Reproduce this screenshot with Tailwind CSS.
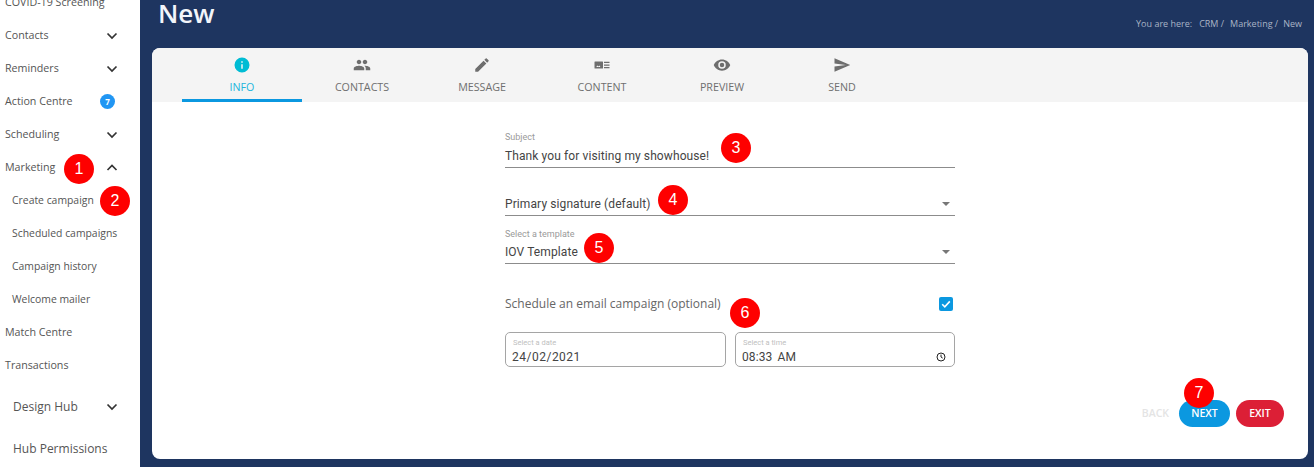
<!doctype html>
<html>
<head>
<meta charset="utf-8">
<script src="https://cdn.jsdelivr.net/npm/@tailwindcss/browser@4"></script>
</head>
<body class="m-0 overflow-hidden bg-[#1e3560]">
<div class="relative flex h-[467px] w-[1314px] overflow-hidden font-['Open_Sans',sans-serif]">

  <aside class="h-full w-[140px] shrink-0 overflow-hidden bg-white text-[10.7px] text-[#555]">
    <div class="mt-[-14px]">
      <div class="flex h-[33px] items-center pl-[5px]">COVID-19 Screening</div>
      <div class="flex h-[33px] items-center justify-between pl-[5px] pr-[22px]"><span>Contacts</span><svg class="h-[12px] w-[12px]" viewBox="0 0 12 12" fill="none" stroke="#333" stroke-width="1.7"><path d="M1.5 3.5l4.5 4.5L10.5 3.5"/></svg></div>
      <div class="flex h-[33px] items-center justify-between pl-[5px] pr-[22px]"><span>Reminders</span><svg class="h-[12px] w-[12px]" viewBox="0 0 12 12" fill="none" stroke="#333" stroke-width="1.7"><path d="M1.5 3.5l4.5 4.5L10.5 3.5"/></svg></div>
      <div class="flex h-[33px] items-center justify-between pl-[5px] pr-[25px]"><span>Action Centre</span><span class="flex h-[15px] w-[15px] items-center justify-center rounded-full bg-[#2196f3] text-[8px] font-bold text-white">7</span></div>
      <div class="flex h-[33px] items-center justify-between pl-[5px] pr-[22px]"><span>Scheduling</span><svg class="h-[12px] w-[12px]" viewBox="0 0 12 12" fill="none" stroke="#333" stroke-width="1.7"><path d="M1.5 3.5l4.5 4.5L10.5 3.5"/></svg></div>
      <div class="flex h-[33px] items-center justify-between pl-[5px] pr-[22px]"><span>Marketing</span><svg class="h-[12px] w-[12px]" viewBox="0 0 12 12" fill="none" stroke="#333" stroke-width="1.7"><path d="M1.5 8L6 3.5 10.5 8"/></svg></div>
      <div class="flex h-[33px] items-center pl-[12px] text-[10.4px]">Create campaign</div>
      <div class="flex h-[33px] items-center pl-[12px] text-[10.4px]">Scheduled campaigns</div>
      <div class="flex h-[33px] items-center pl-[12px] text-[10.4px]">Campaign history</div>
      <div class="flex h-[33px] items-center pl-[12px] text-[10.4px]">Welcome mailer</div>
      <div class="flex h-[33px] items-center pl-[5px]">Match Centre</div>
      <div class="flex h-[33px] items-center pl-[5px]">Transactions</div>
      <div class="mt-[4px] flex h-[42px] items-center justify-between pl-[13px] pr-[22px] text-[12px]"><span>Design Hub</span><svg class="h-[12px] w-[12px]" viewBox="0 0 12 12" fill="none" stroke="#333" stroke-width="1.7"><path d="M1.5 3.5l4.5 4.5L10.5 3.5"/></svg></div>
      <div class="flex h-[42px] items-center pl-[13px] text-[12px]">Hub Permissions</div>
    </div>
  </aside>

  <main class="flex h-full min-w-0 flex-1 flex-col pl-[12px] pr-[6px]">
    <header class="flex h-[48px] shrink-0 items-start justify-between">
      <h1 class="ml-[6px] mt-[-5px] text-[26px] font-semibold leading-[36px] text-[#f2f5fa]">New</h1>
      <div class="mr-[6px] mt-[17px] text-[9px] leading-[14px] text-[#a9b4c6]"><span class="mr-[7px]">You are here:</span><span class="mr-[6px]">CRM /</span><span class="mr-[5px]">Marketing /</span><span>New</span></div>
    </header>

    <section class="flex h-[411px] flex-col overflow-hidden rounded-[8px] bg-white">
      <nav class="flex h-[54px] shrink-0 bg-[#f4f4f4] pl-[30px] text-[10.7px] text-[#6f6f6f]">
        <div class="flex w-[120px] flex-col items-center border-b-[3px] border-[#0b98e0] text-[#22b5dc]">
          <svg class="mt-[8px] h-[18px] w-[18px]" viewBox="0 0 24 24" fill="#00bcd4"><path d="M12 2a10 10 0 100 20 10 10 0 000-20zm1 15h-2v-6h2v6zm0-8h-2V7h2v2z"/></svg>
          <span class="mt-[5px] leading-[16px]">INFO</span>
        </div>
        <div class="flex w-[120px] flex-col items-center">
          <svg class="mt-[8px] h-[18px] w-[18px]" viewBox="0 0 24 24" fill="#6e6e6e"><path d="M16 11c1.66 0 2.99-1.34 2.99-3S17.66 5 16 5s-3 1.34-3 3 1.34 3 3 3zm-8 0c1.66 0 2.99-1.34 2.99-3S9.66 5 8 5 5 6.34 5 8s1.34 3 3 3zm0 2c-2.33 0-7 1.17-7 3.5V19h14v-2.5C15 14.17 10.33 13 8 13zm8 0c-.29 0-.62.02-.97.05 1.16.84 1.97 1.97 1.97 3.45V19h6v-2.5c0-2.33-4.67-3.5-7-3.5z"/></svg>
          <span class="mt-[5px] leading-[16px]">CONTACTS</span>
        </div>
        <div class="flex w-[120px] flex-col items-center">
          <svg class="mt-[8px] h-[18px] w-[18px]" viewBox="0 0 24 24" fill="#6e6e6e"><path d="M3 17.25V21h3.75L17.81 9.94l-3.75-3.75L3 17.25zM20.71 7.04a1 1 0 000-1.41l-2.34-2.34a1 1 0 00-1.41 0l-1.83 1.83 3.75 3.75 1.83-1.83z"/></svg>
          <span class="mt-[5px] leading-[16px]">MESSAGE</span>
        </div>
        <div class="flex w-[120px] flex-col items-center">
          <svg class="mt-[8px] h-[18px] w-[18px]" viewBox="0 0 18 18" fill="#6e6e6e"><path d="M2 5.5h7.5a.5.5 0 01.5.5v6a.5.5 0 01-.5.5H2a.5.5 0 01-.5-.5V6a.5.5 0 01.5-.5z"/><path d="M3.2 11l1.3-1.6 1 1.1 1-.9.9 1.4z" fill="#f4f4f4"/><path d="M11 5.7h5.5v1.3H11zM11 8.4h5.5v1.3H11zM11 11h5.5v1.3H11z"/></svg>
          <span class="mt-[5px] leading-[16px]">CONTENT</span>
        </div>
        <div class="flex w-[120px] flex-col items-center">
          <svg class="mt-[8px] h-[18px] w-[18px]" viewBox="0 0 24 24" fill="#6e6e6e"><path d="M12 4.5C7 4.5 2.73 7.61 1 12c1.73 4.39 6 7.5 11 7.5s9.27-3.11 11-7.5c-1.73-4.39-6-7.5-11-7.5zM12 17a5 5 0 110-10 5 5 0 010 10zm0-8a3 3 0 100 6 3 3 0 000-6z"/></svg>
          <span class="mt-[5px] leading-[16px]">PREVIEW</span>
        </div>
        <div class="flex w-[120px] flex-col items-center">
          <svg class="mt-[8px] h-[18px] w-[18px]" viewBox="0 0 24 24" fill="#6e6e6e"><path d="M2.01 21L23 12 2.01 3 2 10l15 2-15 2z"/></svg>
          <span class="mt-[5px] leading-[16px]">SEND</span>
        </div>
      </nav>

      <div class="relative flex-1">
        <form class="ml-[353px] w-[450px] pt-[30px] font-['Roboto',sans-serif] text-[12px] text-[#444]">
          <div class="h-[36px] border-b border-[#8c8c8c]">
            <div class="text-[9px] leading-[11px] text-[#9a9a9a]">Subject</div>
            <div class="mt-[5px] leading-[16px] tracking-[0.1px]">Thank you for visiting my showhouse!</div>
          </div>
          <div class="mt-[12px] flex h-[36px] items-end justify-between border-b border-[#8c8c8c] pb-[3px] pr-[5px]">
            <span class="leading-[16px] tracking-[0.1px]">Primary signature (default)</span>
            <span class="mb-[6px] h-0 w-0 border-x-[4px] border-t-[4px] border-x-transparent border-t-[#777]"></span>
          </div>
          <div class="mt-[12px] flex h-[36px] items-end justify-between border-b border-[#8c8c8c] pb-[3px] pr-[5px]">
            <div>
              <div class="text-[9px] leading-[11px] text-[#9a9a9a]">Select a template</div>
              <div class="mt-[4px] leading-[16px] tracking-[0.1px]">IOV Template</div>
            </div>
            <span class="mb-[6px] h-0 w-0 border-x-[4px] border-t-[4px] border-x-transparent border-t-[#777]"></span>
          </div>
          <div class="mt-[25px] flex h-[30px] items-center justify-between pr-[2px]">
            <span class="font-['Open_Sans',sans-serif] text-[12px] text-[#666]">Schedule an email campaign (optional)</span>
            <span class="flex h-[14px] w-[14px] items-center justify-center rounded-[2px] bg-[#0b98e0]">
              <svg class="h-[12px] w-[12px]" viewBox="0 0 12 12" fill="none" stroke="#fff" stroke-width="1.6"><path d="M2.2 6.2l2.6 2.6 5-5.4"/></svg>
            </span>
          </div>
          <div class="mt-[13px] flex gap-[9px]">
            <div class="h-[35px] w-[221px] rounded-[5px] border border-[#a5a5a5] pl-[6px] pr-[7px] pt-[5px]">
              <div class="pl-[1px] text-[7.5px] leading-[9px] text-[#c0c0c0]">Select a date</div>
              <div class="mt-[4px] text-[12px] leading-[13px] tracking-[0.5px]">24/02/2021</div>
            </div>
            <div class="flex h-[35px] w-[220px] justify-between rounded-[5px] border border-[#a5a5a5] pl-[6px] pr-[8px] pt-[5px]">
              <div>
                <div class="pl-[1px] text-[7.5px] leading-[9px] text-[#c0c0c0]">Select a time</div>
                <div class="mt-[4px] text-[12px] leading-[13px] tracking-[0.1px] [word-spacing:2px]">08:33 AM</div>
              </div>
              <svg class="mt-[14px] h-[10px] w-[10px]" viewBox="0 0 10 10" fill="none" stroke="#222" stroke-width="1"><circle cx="5" cy="5" r="4"/><path d="M5 2.6V5l1.7 1.1"/></svg>
            </div>
          </div>
        </form>
        <div class="absolute bottom-[32px] right-[24px] flex items-center text-[10.5px] font-semibold">
          <span class="mr-[10px] text-[#e4e4e4]">BACK</span>
          <span class="flex h-[27px] w-[51px] items-center justify-center rounded-full bg-[#0b98e0] text-white">NEXT</span>
          <span class="ml-[6px] flex h-[27px] w-[48px] items-center justify-center rounded-full bg-[#dc1f36] text-white">EXIT</span>
        </div>
      </div>
    </section>
  </main>

  <div class="absolute left-[64px] top-[154px] flex h-[30px] w-[30px] items-center justify-center rounded-full bg-[#fe0000] font-['Liberation_Sans',sans-serif] text-[16px] text-white">1</div>
  <div class="absolute left-[100px] top-[186px] flex h-[30px] w-[30px] items-center justify-center rounded-full bg-[#fe0000] font-['Liberation_Sans',sans-serif] text-[16px] text-white">2</div>
  <div class="absolute left-[721px] top-[133px] flex h-[30px] w-[30px] items-center justify-center rounded-full bg-[#fe0000] font-['Liberation_Sans',sans-serif] text-[16px] text-white">3</div>
  <div class="absolute left-[658px] top-[185px] flex h-[30px] w-[30px] items-center justify-center rounded-full bg-[#fe0000] font-['Liberation_Sans',sans-serif] text-[16px] text-white">4</div>
  <div class="absolute left-[584px] top-[233px] flex h-[30px] w-[30px] items-center justify-center rounded-full bg-[#fe0000] font-['Liberation_Sans',sans-serif] text-[16px] text-white">5</div>
  <div class="absolute left-[730px] top-[298px] flex h-[30px] w-[30px] items-center justify-center rounded-full bg-[#fe0000] font-['Liberation_Sans',sans-serif] text-[16px] text-white">6</div>
  <div class="absolute left-[1184px] top-[378px] flex h-[30px] w-[30px] items-center justify-center rounded-full bg-[#fe0000] font-['Liberation_Sans',sans-serif] text-[16px] text-white">7</div>
</div>
</body>
</html>
